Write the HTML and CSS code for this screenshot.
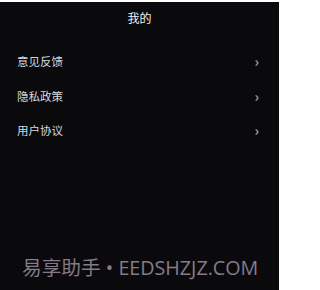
FILE: index.html
```html
<!DOCTYPE html>
<html lang="zh">
<head>
<meta charset="utf-8">
<link rel="stylesheet" href="styles.css">
</head>
<body>
<div class="screen">
  <header class="title">我的</header>
  <ul class="menu">
    <li class="item"><span class="label">意见反馈</span><span class="chev">›</span></li>
    <li class="item"><span class="label">隐私政策</span><span class="chev">›</span></li>
    <li class="item"><span class="label">用户协议</span><span class="chev">›</span></li>
  </ul>
  <div class="spacer"></div>
  <footer class="mark">易享助手 • EEDSHZJZ.COM</footer>
</div>
</body>
</html>
```
FILE: styles.css
```css
html, body {
  margin: 0;
  padding: 0;
  background: #ffffff;
  height: 290px;
  overflow: hidden;
}
.screen {
  box-sizing: border-box;
  width: 279px;
  height: 288px;
  margin-top: 2px;
  background: #0a0a0c;
  display: flex;
  flex-direction: column;
  font-family: "Noto Sans CJK SC", "Noto Sans", sans-serif;
}
.title {
  color: #f2f2f2;
  font-size: 12px;
  text-align: center;
  line-height: 16px;
  padding-top: 8px;
}
.menu {
  list-style: none;
  margin: 0;
  padding: 27px 0 0 0;
  display: flex;
  flex-direction: column;
  gap: 18.5px;
}
.item {
  display: flex;
  justify-content: space-between;
  align-items: center;
  height: 16px;
  padding: 0 20px 0 17px;
}
.label {
  color: #d8d8dc;
  font-size: 11.5px;
  line-height: 16px;
}
.chev {
  color: #9aa0b4;
  font-size: 14px;
  font-weight: bold;
  line-height: 16px;
}
.spacer { flex: 1; }
.mark {
  color: #857b8b;
  font-family: "Open Sans", "Noto Sans CJK SC", sans-serif;
  font-size: 19.7px;
  line-height: 24px;
  padding: 0 0 10px 22px;
  white-space: nowrap;
}
```
